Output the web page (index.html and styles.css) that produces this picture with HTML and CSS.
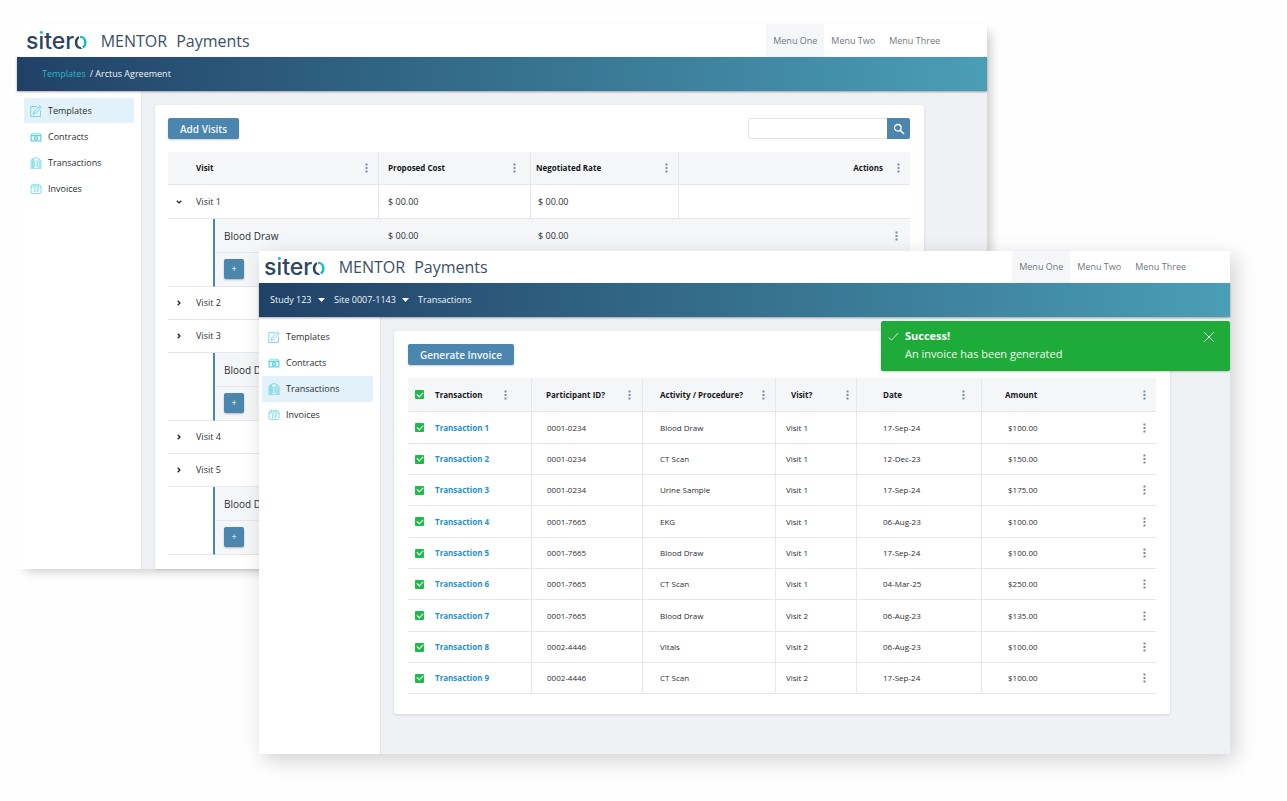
FILE: index.html
```html
<!DOCTYPE html>
<html lang="en">
<head>
<meta charset="utf-8">
<meta name="viewport" content="width=device-width, initial-scale=1">
<title>MENTOR Payments</title>
<link rel="stylesheet" href="styles.css">
</head>
<body>
<svg class="sprite" aria-hidden="true">
  <symbol id="i-edit" viewBox="0 0 24 24"><g fill="none" stroke="currentColor" stroke-width="1.6" stroke-linejoin="round"><path d="M14 3H1.500v20h19.500V11"/><path d="M19.500 1.500l3 3L10 17.500l-4 1.200 1-4.200z"/><path d="M17 4l3 3M7.500 14.500l2.500 2.500"/></g></symbol>
  <symbol id="i-money" viewBox="0 0 24 24"><path d="M4 4.500h16l2 3.500H2z" fill="none" stroke="currentColor" stroke-width="1.400"/><path fill="currentColor" fill-rule="evenodd" d="M1 8h22v13H1zM3.500 10.500v8h17v-8z"/><circle cx="12" cy="14.500" r="4.500" fill="currentColor"/><path d="M13.500 12.800h-2.200v1.700h1.700v1.800h-2.200" fill="none" stroke="#fff" stroke-width="1.200"/></symbol>
  <symbol id="i-building" viewBox="0 0 24 24"><g fill="none" stroke="currentColor" stroke-width="1.500"><path d="M2 22.500V6l4-2v18.500M6 22.500V3l6-2 6 2v19.500M18 5l4 2v15.500M1 22.500h22"/><path d="M9 7v13M12 6v14M15 7v13M20 10v9M4 9v10" stroke-width="1.200"/></g></symbol>
  <symbol id="i-calendar" viewBox="0 0 24 24"><g fill="none" stroke="currentColor" stroke-width="1.600"><rect x="2" y="4" width="20" height="17" rx="3"/><path d="M2 8h20M7 1.500v4M12 1.500v4M17 1.500v4"/><path d="M7.500 11.500h2.500v6M7.500 17.500h3M13.500 11.500h3.500l-2 6M13.500 14.500h3"/></g></symbol>
  <symbol id="i-dots" viewBox="0 0 3 10"><path fill="#7b8aa0" d="M.5.500h2v2h-2zM.5 4h2v2h-2zM.5 7.500h2v2h-2z"/></symbol>
  <symbol id="i-down" viewBox="0 0 6 6"><path d="M.8 1.700L3 3.900l2.200-2.200" fill="none" stroke="#222" stroke-width="1.300"/></symbol>
  <symbol id="i-right" viewBox="0 0 6 6"><path d="M1.700.8L3.900 3 1.700 5.200" fill="none" stroke="#222" stroke-width="1.300"/></symbol>
  <symbol id="i-caret" viewBox="0 0 7 4"><path d="M0 0h7L3.500 4z" fill="#fff"/></symbol>
</svg>

<div class="desktop">
  <section class="window window-templates" aria-label="Templates window">
    <header class="top">
      <div class="brand"><span class="logo">s<span class="logo-i">i</span>ter<span class="logo-o">o</span></span><h1 class="product"><span>MENTOR</span> <span>Payments</span></h1></div>
      <nav class="menu"><a class="on" href="#">Menu One</a><a href="#">Menu Two</a><a href="#">Menu Three</a></nav>
    </header>
    <div class="bar"><nav class="crumbs"><a href="#">Templates</a><span>/ Arctus Agreement</span></nav></div>
    <div class="body">
      <nav class="side">
        <a class="on" href="#"><svg><use href="#i-edit"/></svg>Templates</a>
        <a href="#"><svg><use href="#i-money"/></svg>Contracts</a>
        <a href="#"><svg><use href="#i-building"/></svg>Transactions</a>
        <a href="#"><svg><use href="#i-calendar"/></svg>Invoices</a>
      </nav>
      <main class="main">
        <div class="card">
          <div class="tools">
            <button class="btn" type="button">Add Visits</button>
            <form class="search"><input type="search" aria-label="Search visits"><button type="button" aria-label="Search"><svg viewBox="0 0 12 12"><g fill="none" stroke="#fff"><circle cx="4.800" cy="4.800" r="3.300" stroke-width="1.300"/><path d="M7.200 7.200l3.800 3.800" stroke-width="1.600"/></g></svg></button></form>
          </div>
          <table class="grid visits">
            <colgroup><col class="v-rail"><col class="v-name"><col class="v-cost"><col class="v-rate"><col></colgroup>
            <thead><tr>
              <th colspan="2"><div>Visit<button class="dots" aria-label="Visit options"><svg><use href="#i-dots"/></svg></button></div></th>
              <th><div>Proposed Cost<button class="dots" aria-label="Cost options"><svg><use href="#i-dots"/></svg></button></div></th>
              <th><div>Negotiated Rate<button class="dots" aria-label="Rate options"><svg><use href="#i-dots"/></svg></button></div></th>
              <th class="actions"><div>Actions<button class="dots" aria-label="Action options"><svg><use href="#i-dots"/></svg></button></div></th>
            </tr></thead>
            <tbody>
              <tr class="visit"><td colspan="2"><div><button class="toggle" aria-label="Collapse"><svg><use href="#i-down"/></svg></button>Visit 1</div></td><td>$ 00.00</td><td>$ 00.00</td><td></td></tr>
              <tr class="sub"><td class="rail" rowspan="2"></td><td class="item">Blood Draw</td><td>$ 00.00</td><td>$ 00.00</td><td class="end"><button class="dots" aria-label="Row options"><svg><use href="#i-dots"/></svg></button></td></tr>
              <tr class="sub"><td class="item"><button class="add" aria-label="Add procedure">+</button></td><td></td><td></td><td></td></tr>
              <tr class="visit closed"><td colspan="2"><div><button class="toggle" aria-label="Expand"><svg><use href="#i-right"/></svg></button>Visit 2</div></td><td></td><td></td><td></td></tr>
              <tr class="visit closed"><td colspan="2"><div><button class="toggle" aria-label="Expand"><svg><use href="#i-right"/></svg></button>Visit 3</div></td><td></td><td></td><td></td></tr>
              <tr class="sub"><td class="rail" rowspan="2"></td><td class="item">Blood Draw</td><td></td><td></td><td></td></tr>
              <tr class="sub"><td class="item"><button class="add" aria-label="Add procedure">+</button></td><td></td><td></td><td></td></tr>
              <tr class="visit closed"><td colspan="2"><div><button class="toggle" aria-label="Expand"><svg><use href="#i-right"/></svg></button>Visit 4</div></td><td></td><td></td><td></td></tr>
              <tr class="visit closed"><td colspan="2"><div><button class="toggle" aria-label="Expand"><svg><use href="#i-right"/></svg></button>Visit 5</div></td><td></td><td></td><td></td></tr>
              <tr class="sub"><td class="rail" rowspan="2"></td><td class="item">Blood Draw</td><td></td><td></td><td></td></tr>
              <tr class="sub"><td class="item"><button class="add" aria-label="Add procedure">+</button></td><td></td><td></td><td></td></tr>
            </tbody>
          </table>
        </div>
      </main>
    </div>
  </section>

  <section class="window window-transactions" aria-label="Transactions window">
    <header class="top">
      <div class="brand"><span class="logo">s<span class="logo-i">i</span>ter<span class="logo-o">o</span></span><h1 class="product"><span>MENTOR</span> <span>Payments</span></h1></div>
      <nav class="menu"><a class="on" href="#">Menu One</a><a href="#">Menu Two</a><a href="#">Menu Three</a></nav>
    </header>
    <div class="bar">
      <div class="picks">
        <label class="pick"><select aria-label="Study"><option>Study 123</option></select><svg><use href="#i-caret"/></svg></label>
        <label class="pick"><select aria-label="Site"><option>Site 0007-1143</option></select><svg><use href="#i-caret"/></svg></label>
        <span>Transactions</span>
      </div>
    </div>
    <div class="body">
      <nav class="side">
        <a href="#"><svg><use href="#i-edit"/></svg>Templates</a>
        <a href="#"><svg><use href="#i-money"/></svg>Contracts</a>
        <a class="on" href="#"><svg><use href="#i-building"/></svg>Transactions</a>
        <a href="#"><svg><use href="#i-calendar"/></svg>Invoices</a>
      </nav>
      <main class="main">
        <div class="card">
          <div class="tools"><button class="btn" type="button">Generate Invoice</button></div>
          <table class="grid ledger">
            <colgroup><col class="t-name"><col class="t-pid"><col class="t-act"><col class="t-visit"><col class="t-date"><col></colgroup>
            <thead><tr>
              <th><div><label class="tick"><input type="checkbox" checked aria-label="Select all">Transaction</label><button class="dots" aria-label="Transaction options"><svg><use href="#i-dots"/></svg></button></div></th>
              <th><div>Participant ID?<button class="dots" aria-label="Participant options"><svg><use href="#i-dots"/></svg></button></div></th>
              <th><div>Activity / Procedure?<button class="dots" aria-label="Activity options"><svg><use href="#i-dots"/></svg></button></div></th>
              <th><div>Visit?<button class="dots" aria-label="Visit options"><svg><use href="#i-dots"/></svg></button></div></th>
              <th><div>Date<button class="dots" aria-label="Date options"><svg><use href="#i-dots"/></svg></button></div></th>
              <th><div>Amount<button class="dots" aria-label="Amount options"><svg><use href="#i-dots"/></svg></button></div></th>
            </tr></thead>
            <tbody>
              <tr><td><div class="tick"><input type="checkbox" checked aria-label="Select transaction 1"><a href="#">Transaction 1</a></div></td><td>0001-0234</td><td>Blood Draw</td><td>Visit 1</td><td>17-Sep-24</td><td><div>$100.00<button class="dots" aria-label="Row options"><svg><use href="#i-dots"/></svg></button></div></td></tr>
              <tr><td><div class="tick"><input type="checkbox" checked aria-label="Select transaction 2"><a href="#">Transaction 2</a></div></td><td>0001-0234</td><td>CT Scan</td><td>Visit 1</td><td>12-Dec-23</td><td><div>$150.00<button class="dots" aria-label="Row options"><svg><use href="#i-dots"/></svg></button></div></td></tr>
              <tr><td><div class="tick"><input type="checkbox" checked aria-label="Select transaction 3"><a href="#">Transaction 3</a></div></td><td>0001-0234</td><td>Urine Sample</td><td>Visit 1</td><td>17-Sep-24</td><td><div>$175.00<button class="dots" aria-label="Row options"><svg><use href="#i-dots"/></svg></button></div></td></tr>
              <tr><td><div class="tick"><input type="checkbox" checked aria-label="Select transaction 4"><a href="#">Transaction 4</a></div></td><td>0001-7665</td><td>EKG</td><td>Visit 1</td><td>06-Aug-23</td><td><div>$100.00<button class="dots" aria-label="Row options"><svg><use href="#i-dots"/></svg></button></div></td></tr>
              <tr><td><div class="tick"><input type="checkbox" checked aria-label="Select transaction 5"><a href="#">Transaction 5</a></div></td><td>0001-7665</td><td>Blood Draw</td><td>Visit 1</td><td>17-Sep-24</td><td><div>$100.00<button class="dots" aria-label="Row options"><svg><use href="#i-dots"/></svg></button></div></td></tr>
              <tr><td><div class="tick"><input type="checkbox" checked aria-label="Select transaction 6"><a href="#">Transaction 6</a></div></td><td>0001-7665</td><td>CT Scan</td><td>Visit 1</td><td>04-Mar-25</td><td><div>$250.00<button class="dots" aria-label="Row options"><svg><use href="#i-dots"/></svg></button></div></td></tr>
              <tr><td><div class="tick"><input type="checkbox" checked aria-label="Select transaction 7"><a href="#">Transaction 7</a></div></td><td>0001-7665</td><td>Blood Draw</td><td>Visit 2</td><td>06-Aug-23</td><td><div>$135.00<button class="dots" aria-label="Row options"><svg><use href="#i-dots"/></svg></button></div></td></tr>
              <tr><td><div class="tick"><input type="checkbox" checked aria-label="Select transaction 8"><a href="#">Transaction 8</a></div></td><td>0002-4446</td><td>Vitals</td><td>Visit 2</td><td>06-Aug-23</td><td><div>$100.00<button class="dots" aria-label="Row options"><svg><use href="#i-dots"/></svg></button></div></td></tr>
              <tr><td><div class="tick"><input type="checkbox" checked aria-label="Select transaction 9"><a href="#">Transaction 9</a></div></td><td>0002-4446</td><td>CT Scan</td><td>Visit 2</td><td>17-Sep-24</td><td><div>$100.00<button class="dots" aria-label="Row options"><svg><use href="#i-dots"/></svg></button></div></td></tr>
            </tbody>
          </table>
        </div>
      </main>
    </div>
    <div class="toast" role="status">
      <svg class="toast-icon" viewBox="0 0 12 12"><path d="M.8 7l3 3L11.300 2" fill="none" stroke="#d9f5df" stroke-width="1"/></svg>
      <div class="toast-text"><strong>Success!</strong><span>An invoice has been generated</span></div>
      <button type="button" aria-label="Dismiss"><svg viewBox="0 0 12 12"><path d="M1 1l10 10M11 1L1 11" fill="none" stroke="#d9f5df" stroke-width="1"/></svg></button>
    </div>
  </section>
</div>
</body>
</html>
```

FILE: styles.css
```css
* { box-sizing: border-box; }

body {
  margin: 0;
  background: #fefefe;
  color: #2b2f33;
  font: 9px/12px "Open Sans", sans-serif;
}

button, input, select { font: inherit; color: inherit; margin: 0; padding: 0; border: 0; }
button { background: none; cursor: pointer; }
a { color: inherit; text-decoration: none; }
svg { display: block; flex: none; }
.sprite { position: absolute; width: 0; height: 0; }

/* Two overlapping windows on a free canvas */
.desktop { position: relative; min-height: 100vh; }
.window { position: absolute; background: #fff; }
.window-templates {
  --header: 33px; --edge: 9px; --crumb: 25px; --side: 125px; --side-left: 7px; --side-top: 7px;
  --menu-right: 40px; --main-right: 63px;
  top: 24px; left: 17px; right: 300px;
  box-shadow: 6px 5px 10px -3px rgba(0, 0, 0, .22);
}
.window-transactions {
  --header: 32px; --edge: 5px; --crumb: 11px; --side: 122px; --side-left: 3px; --side-top: 7px;
  --menu-right: 37px; --main-right: 60px;
  top: 251px; left: 259px; right: 57px;
  box-shadow: 5px 6px 20px rgba(0, 0, 0, .18);
}

.top {
  display: flex;
  align-items: center;
  justify-content: space-between;
  height: var(--header);
  padding: 0 var(--menu-right) 0 var(--edge);
}
.brand { display: flex; align-items: center; gap: 13px; }
.logo { color: #2a4560; font: 500 23px/30px Inter, sans-serif; }
.logo-i, .logo-o { background-clip: text; -webkit-background-clip: text; color: transparent; }
.logo-i { background-image: linear-gradient(#16bccb 9px, #2a4560 9px); }
.logo-o { background-image: linear-gradient(75deg, #2a4560 44%, #fff 44%, #fff 50%, #16bccb 50%); }
.product { display: flex; gap: 9px; margin: 0; color: #3b5068; font-size: 16px; font-weight: 400; line-height: 22px; }
.menu { display: flex; height: 100%; color: #6f7882; }
.menu a { display: flex; align-items: center; padding: 0 7px; }
.menu .on { background: #f5f6f8; }

.bar {
  position: relative;
  display: flex;
  align-items: center;
  height: 34px;
  padding-left: var(--crumb);
  background: linear-gradient(90deg, #214167, #4a9eb6);
  box-shadow: 0 1px 2px rgba(0, 0, 0, .35);
  color: #f1f5f8;
}
.crumbs { display: flex; gap: 4px; }
.crumbs a { color: #2fb5c4; }
.picks { display: flex; align-items: center; gap: 9px; }
.pick { display: flex; align-items: center; gap: 6px; }
.pick select { appearance: none; background: none; }
.pick svg { width: 7px; height: 4px; }

.body { display: grid; grid-template-columns: var(--side) 1fr; }
.side {
  padding: var(--side-top) 7px 0 var(--side-left);
  border-right: 1px solid #e3e7ec;
}
.side a { display: flex; align-items: center; gap: 6px; height: 26px; padding-left: 6px; border-radius: 2px; }
.window-templates .side a { height: 25px; margin-bottom: 1px; }
.side .on { background: #e2f1fa; }
.side svg { width: 12px; height: 12px; color: #62d3de; }

.main { padding: 14px var(--main-right) 0 13px; background: #eff1f5; }
.window-transactions .main { padding-bottom: 40px; }
.card { padding: 13px 14px 14px 13px; border-radius: 3px 3px 0 0; background: #fff; box-shadow: 0 1px 3px rgba(40, 60, 90, .14); }
.window-transactions .card { padding: 13px 14px 20px; border-radius: 3px; }
.tools { display: flex; justify-content: space-between; margin-bottom: 13px; }
.btn {
  height: 21px;
  padding: 0 12px;
  border-radius: 2px;
  background: #4b86ae;
  box-shadow: 0 1px 2px rgba(0, 0, 0, .2);
  color: #f4f8fb;
  font-size: 10px;
  font-weight: 600;
}
.search { display: flex; height: 21px; margin: 0; }
.search input { width: 139px; padding: 0 6px; border: 1px solid #e2e4e8; border-right: 0; border-radius: 2px 0 0 2px; background: #fff; }
.search button { display: grid; place-items: center; width: 23px; border-radius: 0 2px 2px 0; background: #4b86ae; }
.search svg { width: 12px; height: 12px; }

.grid { width: 100%; border-collapse: separate; border-spacing: 0; table-layout: fixed; font-size: 8px; }
.grid th, .grid td { padding: 0; border-bottom: 1px solid #e5e7ea; text-align: left; white-space: nowrap; }
.grid th { height: 33px; background: #f5f6f8; color: #15181b; font-weight: 700; }
.grid th div, .ledger td:last-child div { display: flex; align-items: center; justify-content: space-between; }
.dots svg { width: 3px; height: 10px; }

/* Visits table */
.v-rail { width: 47px; }
.v-name { width: 164px; }
.v-cost { width: 152px; }
.v-rate { width: 148px; }
.visits th:not(:last-child), .visit td:not(:last-child) { border-right: 1px solid #e5e7ea; }
.visits th:nth-child(1) { padding: 0 10px 0 28px; }
.visits th:nth-child(2) { padding: 0 14px 0 9px; }
.visits th:nth-child(3) { padding: 0 10px 0 5px; }
.visits .actions { padding-right: 10px; }
.visits .actions div { justify-content: flex-end; gap: 14px; }
.visits td { height: 34px; font-size: 9px; }
.visits .closed td { height: 33px; }
.visit td:nth-child(2), .sub:has(.rail) td:nth-child(3) { padding-left: 9px; }
.visit td:nth-child(3), .sub:has(.rail) td:nth-child(4) { padding-left: 7px; }
.visit div { display: flex; align-items: center; gap: 14px; padding-left: 8px; }
.toggle svg { width: 6px; height: 6px; }
.sub td { background: #f5f6f8; }
.sub .rail { border-right: 2px solid #4b86ae; background: #fff; }
.sub .item { padding-left: 9px; font-size: 10px; }
.sub .end { padding-right: 12px; }
.sub .end .dots { display: block; margin-left: auto; }
.add { display: block; width: 20px; height: 20px; margin-bottom: 2px; border-radius: 2px; background: #4b86ae; box-shadow: 0 1px 2px rgba(0, 0, 0, .25); color: #fff; font-size: 9px; }

/* Transactions table */
.t-name { width: 124px; }
.t-pid { width: 111px; }
.t-act { width: 133px; }
.t-visit { width: 81px; }
.t-date { width: 125px; }
.ledger th:not(:last-child), .ledger td:not(:last-child) { border-right: 1px solid #e5e7ea; }
.ledger th { height: 34px; }
.ledger td { height: 31px; }
.ledger tr:nth-child(3n + 1) td { height: 32px; }
.ledger th:nth-child(1) { padding: 0 24px 0 7px; }
.ledger th:nth-child(2) { padding: 0 11px 0 14px; }
.ledger th:nth-child(3) { padding: 0 10px 0 17px; }
.ledger th:nth-child(4) { padding: 0 7px 0 15px; }
.ledger th:nth-child(5) { padding: 0 16px 0 26px; }
.ledger th:nth-child(6) { padding: 0 10px 0 23px; }
.ledger td:nth-child(1) { padding-left: 7px; }
.ledger td:nth-child(2) { padding-left: 15px; }
.ledger td:nth-child(3) { padding-left: 17px; }
.ledger td:nth-child(4) { padding-left: 10px; }
.ledger td:nth-child(5) { padding-left: 26px; }
.ledger td:nth-child(6) { padding: 0 10px 0 26px; }
.tick { display: flex; align-items: center; gap: 11px; }
.tick a { color: #2490d0; font-weight: 700; }
.tick input { display: grid; place-items: center; width: 9px; height: 9px; border-radius: 1px; background: #20b94b; appearance: none; }
.tick input:checked::after { content: ""; width: 5px; height: 3px; border: solid #fff; border-width: 0 0 1px 1px; transform: translateY(-1px) rotate(-45deg); }

.toast {
  position: absolute;
  top: 70px;
  right: 0;
  display: flex;
  width: 349px;
  padding: 6px 15px 8px 7px;
  border-radius: 2px;
  background: #1eab39;
  box-shadow: 0 1px 2px rgba(0, 0, 0, .2);
  color: #effbf1;
  font-size: 11px;
  line-height: 18px;
}
.toast-icon { width: 11px; height: 11px; margin: 4px 6px 0 0; }
.toast-text { display: flex; flex: 1; flex-direction: column; }
.toast strong { color: #fff; }
.toast button { align-self: flex-start; margin-top: 4px; }
.toast button svg { width: 12px; height: 12px; }
```
